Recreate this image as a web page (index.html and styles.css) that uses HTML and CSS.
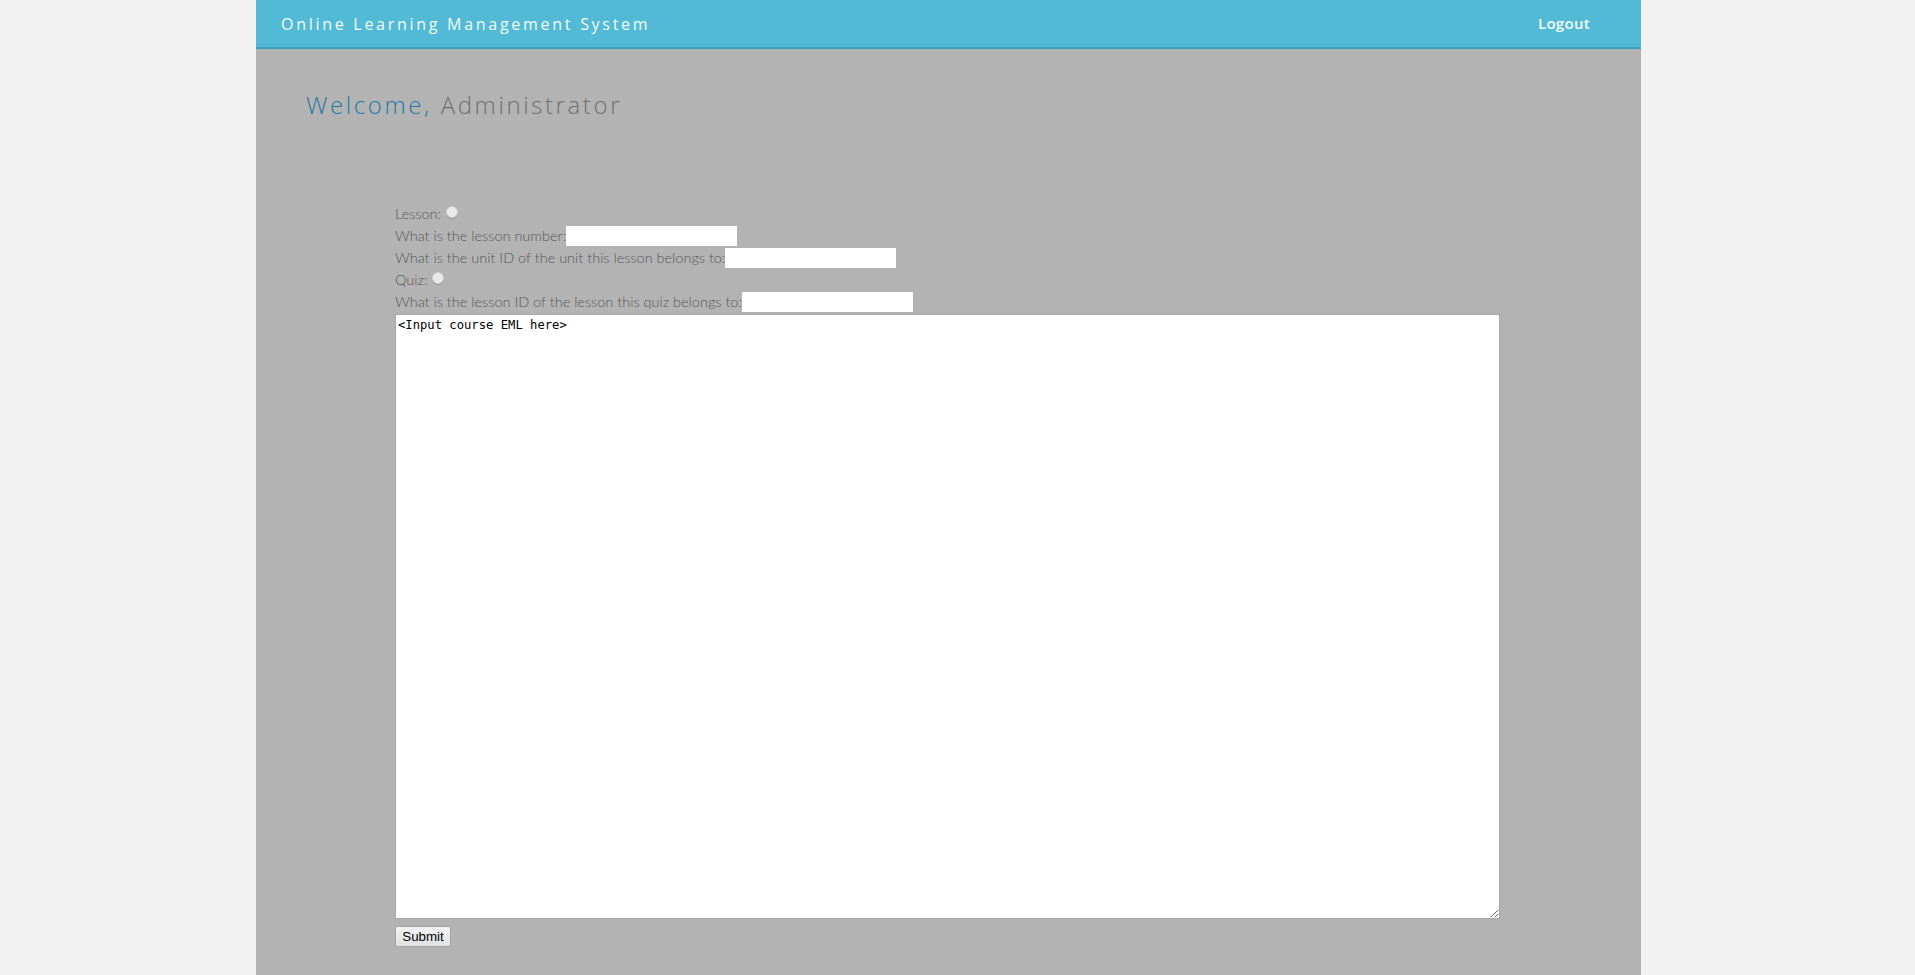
FILE: index.html
```html
<!DOCTYPE html>
<html lang="en">
<head>
<meta charset="utf-8">
<title>Online Learning Management System</title>
<link rel="stylesheet" href="styles.css">
</head>
<body>
<div class="page">
  <header class="topbar">
    <span class="brand">Online Learning Management System</span>
    <a class="logout" href="#">Logout</a>
  </header>
  <main class="content">
    <h1 class="welcome"><span class="hello">Welcome,</span> <span class="user">Administrator</span></h1>
    <form class="eml-form">
      <div class="row">Lesson: <input class="radio" type="radio" name="kind"></div>
      <div class="row">What is the lesson number:<input class="field" type="text"></div>
      <div class="row">What is the unit ID of the unit this lesson belongs to:<input class="field" type="text"></div>
      <div class="row">Quiz: <input class="radio" type="radio" name="kind"></div>
      <div class="row">What is the lesson ID of the lesson this quiz belongs to:<input class="field" type="text"></div>
      <textarea class="eml">&lt;Input course EML here&gt;</textarea>
      <div class="actions"><button class="submit" type="button">Submit</button></div>
    </form>
  </main>
</div>
</body>
</html>
```

FILE: styles.css
```css
html, body {
  margin: 0;
  padding: 0;
  background: #f2f2f2;
}
.page {
  width: 1385px;
  margin-left: 256px;
  background: #b3b3b3;
  min-height: 1210px;
}
.topbar {
  height: 47px;
  background: #52bad5;
  border-bottom: 2px solid #3aa3c0;
  display: flex;
  align-items: center;
  justify-content: space-between;
  padding: 0 51px 0 25px;
  font-family: "Open Sans", sans-serif;
}
.brand {
  color: #f4fbfd;
  font-size: 16px;
  letter-spacing: 2.72px;
  font-weight: 500;
}
.logout {
  color: #f4fbfd;
  font-size: 15px;
  font-weight: 600;
  letter-spacing: 0.3px;
  text-decoration: none;
  margin-bottom: 2px;
}
.content {
  padding: 41px 0 0 0;
}
.welcome {
  margin: 0 0 0 50px;
  font-family: "Open Sans", sans-serif;
  font-weight: 300;
  font-size: 24px;
  line-height: 30px;
  letter-spacing: 2.6px;
}
.hello { color: #1f7aa3; }
.user { color: #707070; }
.eml-form {
  margin: 83px 0 0 139px;
  font-family: Lato, sans-serif;
  font-weight: 300;
  font-size: 14.5px;
  color: #575757;
}
.row {
  height: 22px;
  line-height: 22px;
  display: flex;
  align-items: center;
  white-space: pre;
}
.field {
  width: 171px;
  height: 20px;
  box-sizing: border-box;
  border: none;
  background: #fff;
  margin: 0;
  padding: 1px 2px;
}
.radio {
  appearance: none;
  -webkit-appearance: none;
  width: 12px;
  height: 12px;
  margin: 0 0 4px 1px;
  border-radius: 50%;
  background: #e9e9e9;
  border: 1px solid #cfcfcf;
  box-shadow: 0 1px 1px rgba(0,0,0,0.15);
}
.eml {
  display: block;
  width: 1105px;
  height: 605px;
  box-sizing: border-box;
  margin: 1px 0 0 0;
  padding: 2px;
  border: 1px solid #a8a8a8;
  background: #fff;
  font-family: "DejaVu Sans Mono", "Liberation Mono", monospace;
  font-size: 12.2px;
  line-height: 16px;
  color: #000;
  resize: both;
}
.actions {
  padding-top: 7px;
}
.submit {
  width: 56px;
  height: 21px;
  padding: 0;
  font-family: "Liberation Sans", Arial, sans-serif;
  font-size: 13.33px;
  color: #000;
  background: linear-gradient(#f3f3f3, #e1e1e1);
  border: 1px solid #a3a3a3;
  border-radius: 2px;
}
```
